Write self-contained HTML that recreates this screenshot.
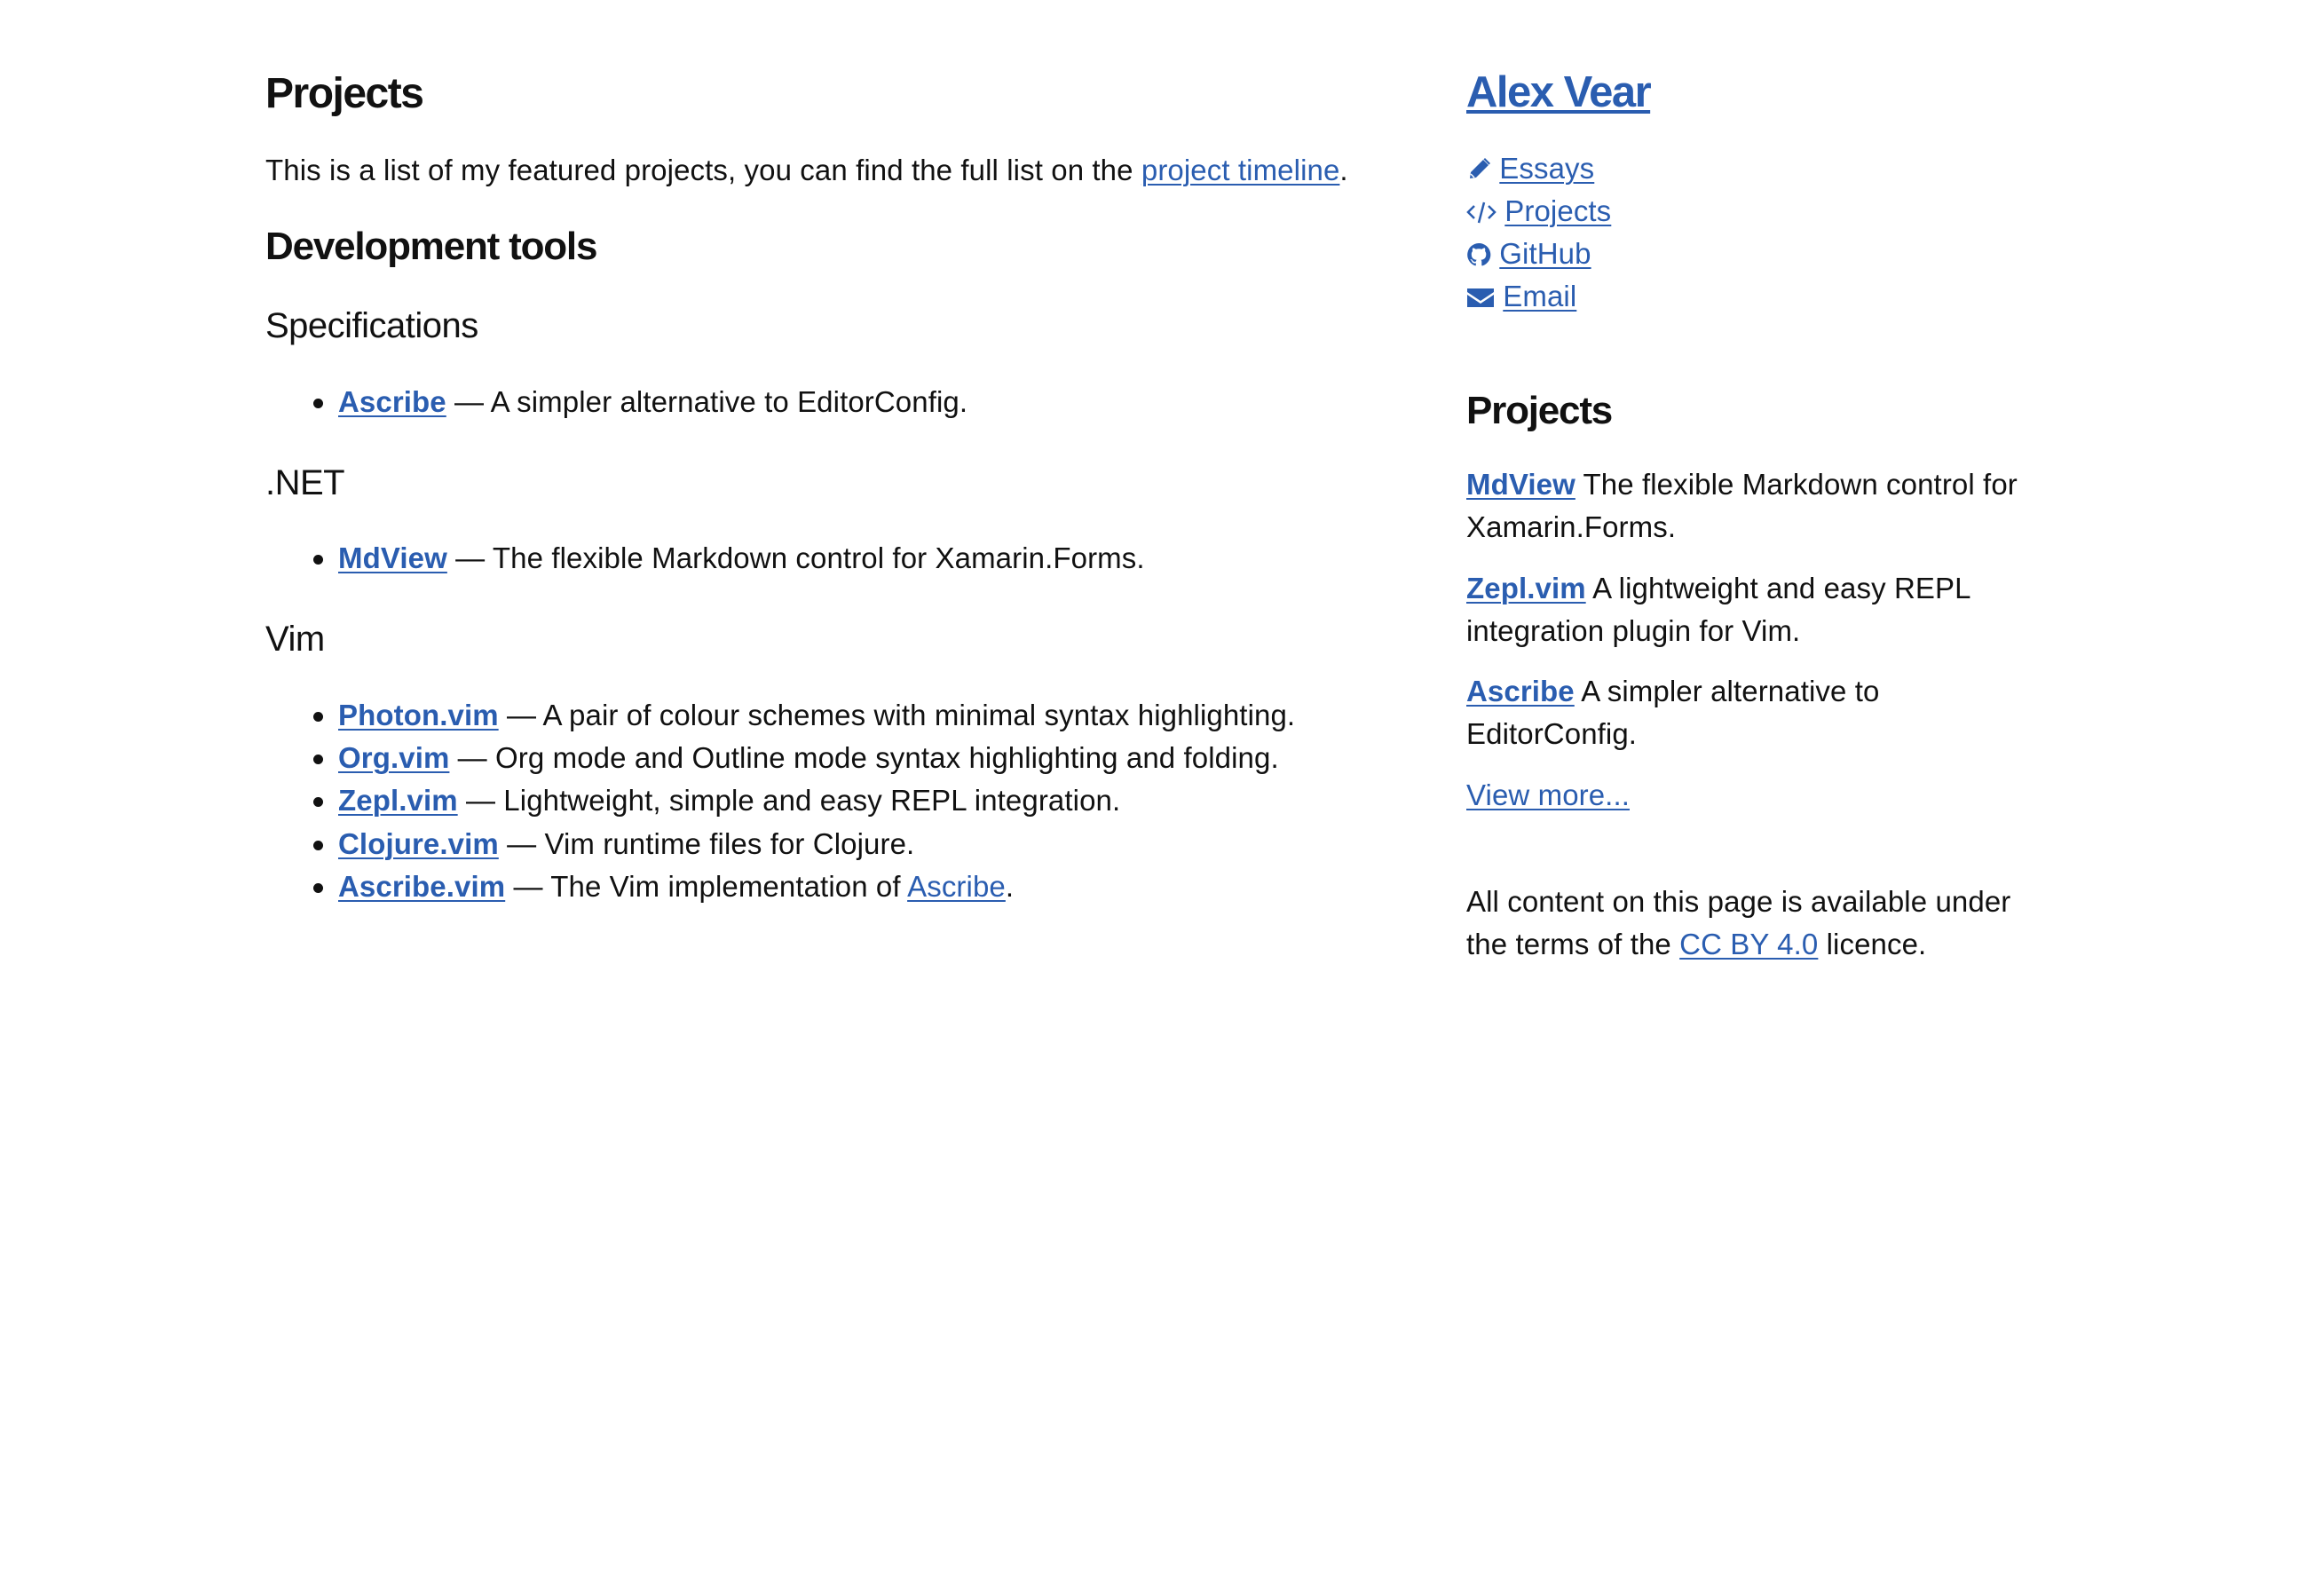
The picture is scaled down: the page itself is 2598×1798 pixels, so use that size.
<!DOCTYPE html>
<html><head><meta charset="utf-8"><style>
body{margin:0;background:#fff;width:2598px;height:1798px;position:relative;font-family:"Liberation Sans",sans-serif;color:#111;overflow:hidden}
.a{position:absolute;white-space:nowrap;line-height:48px;font-size:33px;letter-spacing:0.1px}
a{color:#2a5db0;text-decoration:underline;text-decoration-thickness:2px;text-underline-offset:4px}
b a,a b{font-weight:bold}
.h1{font-size:48px;font-weight:bold;line-height:60px;letter-spacing:-1.5px}
.h2{font-size:44px;font-weight:bold;line-height:60px;letter-spacing:-1.2px}
.h3{font-size:40px;line-height:60px;letter-spacing:-0.5px}
.li{left:381px}
.li:before{content:"";position:absolute;left:-28px;top:20px;width:11px;height:11px;border-radius:50%;background:#111}
svg{vertical-align:-4px;fill:#2a5db0}
</style></head><body>
<div class="a h1" style="left:299px;top:76px">Projects</div>
<div class="a" style="left:299px;top:168px">This is a list of my featured projects, you can find the full list on the <a>project timeline</a>.</div>
<div class="a h2" style="left:299px;top:248px">Development tools</div>
<div class="a h3" style="left:299px;top:337px">Specifications</div>
<div class="a li" style="top:429px"><a><b>Ascribe</b></a> — A simpler alternative to EditorConfig.</div>
<div class="a h3" style="left:299px;top:514px">.NET</div>
<div class="a li" style="top:605px"><a><b>MdView</b></a> — The flexible Markdown control for Xamarin.Forms.</div>
<div class="a h3" style="left:299px;top:690px">Vim</div>
<div class="a li" style="top:782px"><a><b>Photon.vim</b></a> — A pair of colour schemes with minimal syntax highlighting.</div>
<div class="a li" style="top:830px"><a><b>Org.vim</b></a> — Org mode and Outline mode syntax highlighting and folding.</div>
<div class="a li" style="top:878px"><a><b>Zepl.vim</b></a> — Lightweight, simple and easy REPL integration.</div>
<div class="a li" style="top:927px"><a><b>Clojure.vim</b></a> — Vim runtime files for Clojure.</div>
<div class="a li" style="top:975px"><a><b>Ascribe.vim</b></a> — The Vim implementation of <a>Ascribe</a>.</div>

<div class="a h1" style="left:1652px;top:74px;font-size:49px"><a style="text-decoration-thickness:4px">Alex Vear</a></div>
<div class="a" style="left:1652px;top:166px">
<svg width="28" height="28" viewBox="0 0 28 28"><path d="M19 3l6 6-14 14-7 1 1-7z M21 1l6 6-1.5 1.5-6-6z"/><path d="M5 19l4 4" stroke="#fff" stroke-width="1.5"/></svg> <a>Essays</a><br>
<svg width="34" height="28" viewBox="0 0 34 28"><path d="M9 7l-7 7 7 7M25 7l7 7-7 7M20 3l-6 23" stroke="#2a5db0" stroke-width="2.5" fill="none"/></svg> <a>Projects</a><br>
<svg width="28" height="28" viewBox="0 0 28 28"><path d="M14 1a13 13 0 0 0-4 25.3c.6.1.8-.3.8-.6v-2.3c-3.6.8-4.4-1.6-4.4-1.6-.6-1.5-1.4-1.9-1.4-1.9-1.2-.8.1-.8.1-.8 1.3.1 2 1.3 2 1.3 1.2 2 3 1.4 3.8 1.1.1-.8.5-1.4.8-1.7-2.9-.3-5.9-1.4-5.9-6.4 0-1.4.5-2.6 1.3-3.5-.1-.3-.6-1.7.1-3.5 0 0 1.1-.3 3.6 1.3a12 12 0 0 1 6.5 0c2.5-1.7 3.6-1.3 3.6-1.3.7 1.8.3 3.1.1 3.5.8.9 1.3 2.1 1.3 3.5 0 5-3 6.1-5.9 6.4.5.4.9 1.2.9 2.4v3.6c0 .3.2.7.9.6A13 13 0 0 0 14 1z"/></svg> <a>GitHub</a><br>
<svg width="32" height="28" viewBox="0 0 32 28"><path d="M1 4h30v4l-15 10L1 8z M1 11l15 10 15-10v14H1z"/></svg> <a>Email</a></div>
<div class="a h2" style="left:1652px;top:433px">Projects</div>
<div class="a" style="left:1652px;top:522px"><a><b>MdView</b></a> The flexible Markdown control for<br>Xamarin.Forms.</div>
<div class="a" style="left:1652px;top:639px"><a><b>Zepl.vim</b></a> A lightweight and easy REPL<br>integration plugin for Vim.</div>
<div class="a" style="left:1652px;top:755px"><a><b>Ascribe</b></a> A simpler alternative to<br>EditorConfig.</div>
<div class="a" style="left:1652px;top:872px"><a>View more...</a></div>
<div class="a" style="left:1652px;top:992px">All content on this page is available under<br>the terms of the <a>CC BY 4.0</a> licence.</div>
</body></html>
